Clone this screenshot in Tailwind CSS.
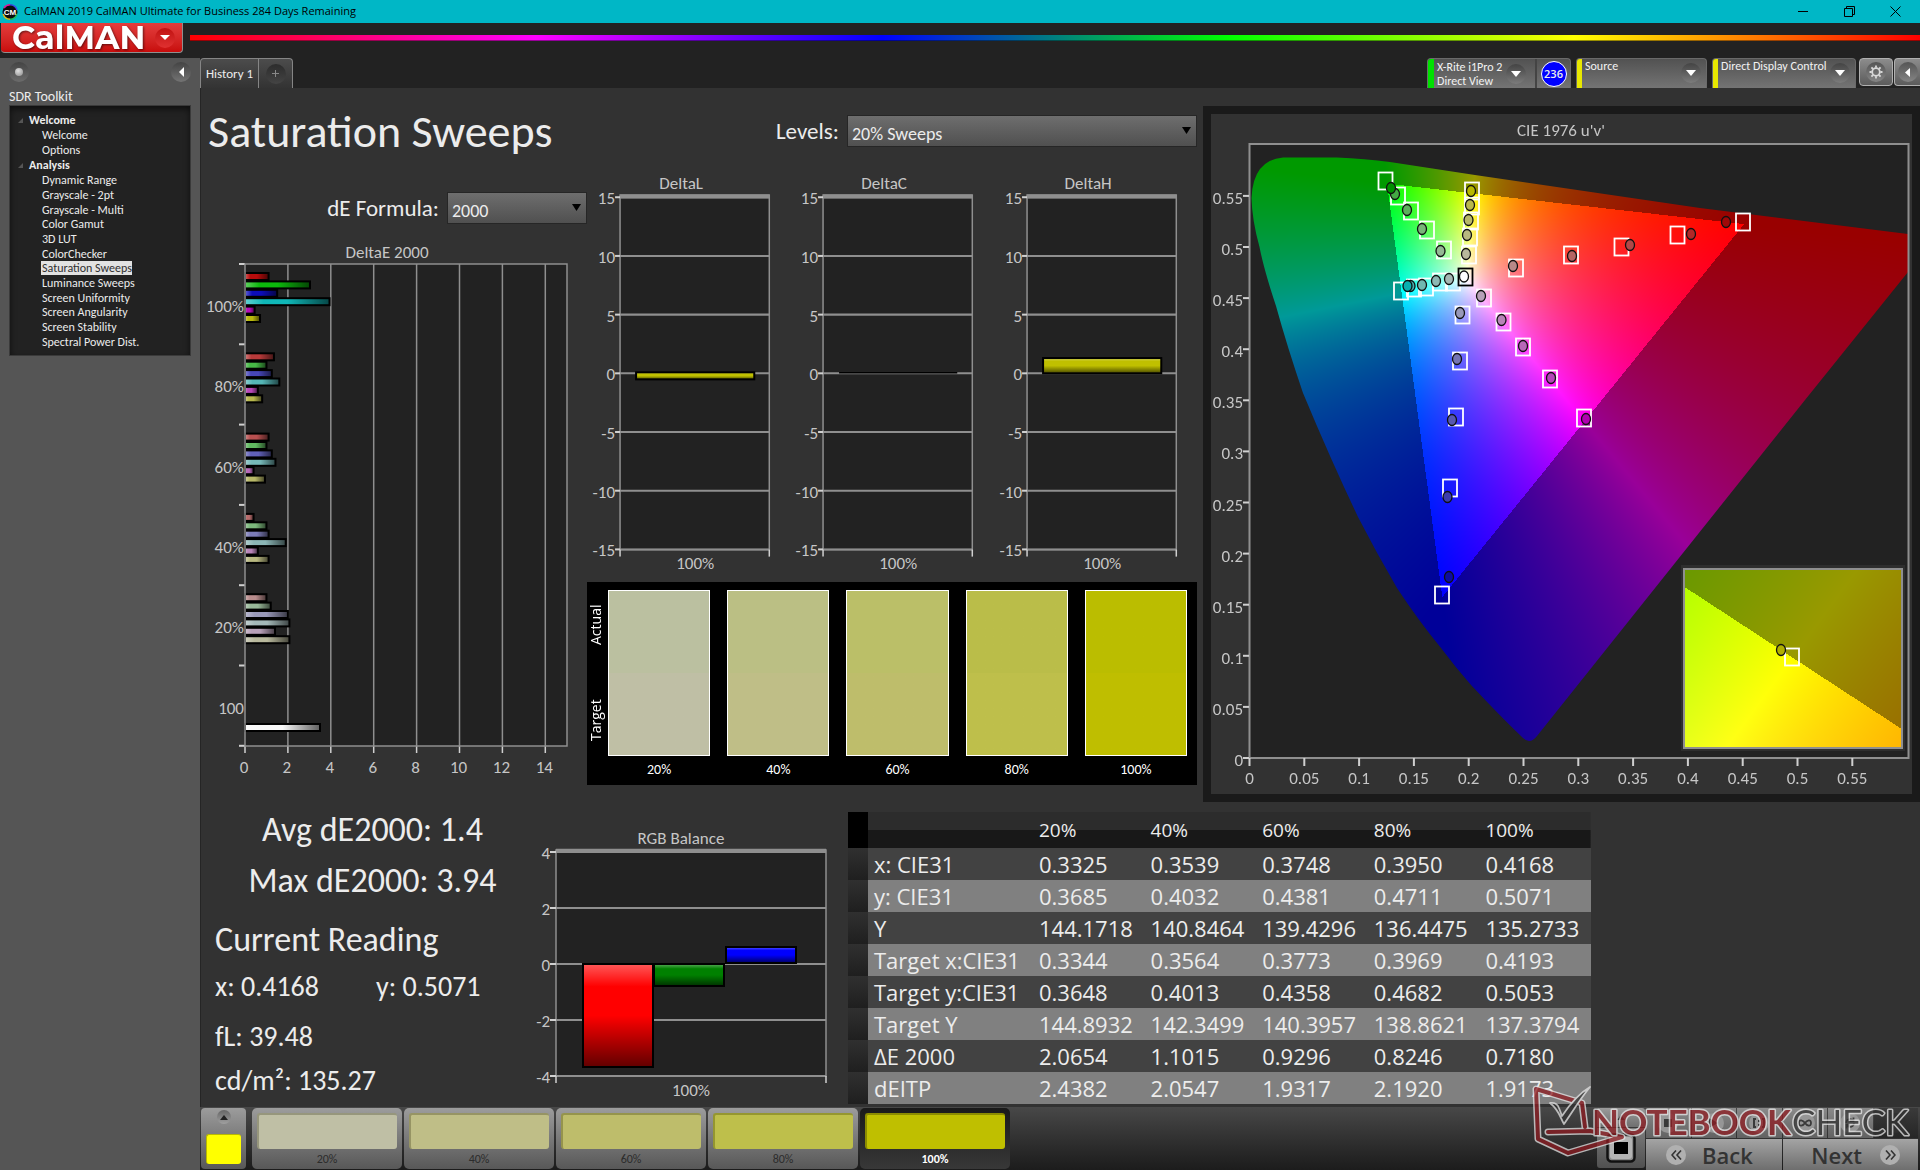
<!DOCTYPE html>
<html lang="en">
<head>
    <meta charset="UTF-8">
    <meta name="viewport" content="width=device-width, initial-scale=1.0">
    <title>CalMAN 2019 - Saturation Sweeps</title>
    <script src="https://cdn.jsdelivr.net/npm/@tailwindcss/browser@4"></script>
</head>
<body class="bg-[#222222] text-[#ececec] font-['Carlito','Lato',sans-serif]">
<div class="min-h-screen flex flex-col relative overflow-hidden">

    <!-- window title bar -->
    <div class="h-[23px] bg-[#00b7c6] flex items-center justify-between text-black">
        <div class="flex items-center gap-[6px] pl-[2px]">
            <svg class="w-4 h-4" viewBox="0 0 16 16">
                <circle cx="8" cy="8" r="7.5" fill="#0b0b0b"/>
                <path d="M2 4A7.5 7.5 0 0 1 8 .7" fill="none" stroke="#e0189a" stroke-width="1.4"/>
                <path d="M8 .7A7.5 7.5 0 0 1 15 6" fill="none" stroke="#3a49e8" stroke-width="1.4"/>
                <path d="M15 10A7.5 7.5 0 0 1 8 15.3" fill="none" stroke="#18c060" stroke-width="1.4"/>
                <path d="M8 15.3A7.5 7.5 0 0 1 1.2 10" fill="none" stroke="#d8c020" stroke-width="1.4"/>
                <text x="8" y="11" text-anchor="middle" fill="#fff" class="text-[8px] font-bold font-['Liberation_Sans',sans-serif]">CM</text>
            </svg>
            <span class="text-[11px] font-['Open_Sans',sans-serif]">CalMAN 2019 CalMAN Ultimate for Business 284 Days Remaining</span>
        </div>
        <div class="flex items-center gap-[26px] pr-[15px]">
            <button aria-label="Minimize" class="w-5 h-5 grid place-items-center"><svg class="w-[11px] h-[11px]" viewBox="0 0 11 11"><path d="M0 5.5h10" stroke="#000"/></svg></button>
            <button aria-label="Restore" class="w-5 h-5 grid place-items-center"><svg class="w-[11px] h-[11px]" viewBox="0 0 11 11" fill="none" stroke="#000"><path d="M.5 2.5h8v8h-8zM2.5 2.5v-2h8v8h-2"/></svg></button>
            <button aria-label="Close" class="w-5 h-5 grid place-items-center"><svg class="w-[11px] h-[11px]" viewBox="0 0 11 11"><path d="M.5.5l10 10M10.5.5l-10 10" stroke="#000"/></svg></button>
        </div>
    </div>

    <!-- logo and rainbow -->
    <header class="h-[35px] flex items-start">
        <button class="ml-px w-[182px] h-[30px] shrink-0 flex items-center justify-between pl-[11px] pr-[7px] rounded-b-[4px] border-r border-b border-[#8f8f8f] bg-linear-to-b from-[#e43c3c] to-[#c80a0a]">
            <span class="text-[32px] leading-[28px] font-bold text-white font-['Montserrat','Inter',sans-serif] drop-shadow-[1px_1px_1px_#0008]">CalMAN</span>
            <span class="w-5 h-5 shrink-0 rounded-full bg-linear-to-b from-[#c01010] to-[#e03030] grid place-items-center">
                <svg class="w-[10px] h-[5px]" viewBox="0 0 10 5"><path d="M0 0h10L5 5z" fill="#fff"/></svg>
            </span>
        </button>
        <div class="ml-[7px] mt-[12px] h-[6px] flex-1 border-b border-black/40 bg-[linear-gradient(90deg,#f00,#f0f,#00f,#0f0,#ff0,#f00)]"></div>
    </header>

    <div class="flex-1 flex">
        <!-- workflow tree -->
        <aside class="w-[200px] shrink-0 bg-[#555555] px-[9px] pt-1">
            <div class="flex justify-between items-center">
                <button aria-label="Options" class="w-5 h-5 rounded-full bg-linear-to-b from-[#444] to-[#6c6c6c] grid place-items-center">
                    <span class="w-2 h-2 rounded-full bg-[radial-gradient(circle_at_40%_35%,#e0e0e0,#8a8a8a)]"></span>
                </button>
                <button aria-label="Collapse" class="w-5 h-5 rounded-full bg-linear-to-b from-[#444] to-[#747474] grid place-items-center">
                    <svg class="w-[5px] h-[10px]" viewBox="0 0 5 10"><path d="M5 0v10L0 5z" fill="#fff"/></svg>
                </button>
            </div>
            <h2 class="mt-[6px] h-[17px] text-sm leading-[17px]">SDR Toolkit</h2>
            <nav class="h-[251px] bg-[#222222] border border-[#3a3a3a] pt-[6px] text-xs shadow-[inset_0_3px_6px_#0009]">
                <h3 class="h-4 leading-4 font-bold flex items-center gap-[6px] pl-2"><svg class="w-[5px] h-[5px]" viewBox="0 0 5 5"><path d="M5 0v5H0z" fill="#555"/></svg>Welcome</h3>
                <ul class="h-[29px] grid auto-rows-fr items-center leading-[14px] pl-[32px]">
                    <li><a href="#">Welcome</a></li>
                    <li><a href="#">Options</a></li>
                </ul>
                <h3 class="h-4 leading-4 font-bold flex items-center gap-[6px] pl-2"><svg class="w-[5px] h-[5px]" viewBox="0 0 5 5"><path d="M5 0v5H0z" fill="#555"/></svg>Analysis</h3>
                <ul class="h-[176px] grid auto-rows-fr items-center leading-[14px] pl-[32px]">
                    <li><a href="#">Dynamic Range</a></li>
                    <li><a href="#">Grayscale - 2pt</a></li>
                    <li><a href="#">Grayscale - Multi</a></li>
                    <li><a href="#">Color Gamut</a></li>
                    <li><a href="#">3D LUT</a></li>
                    <li><a href="#">ColorChecker</a></li>
                    <li class="flex"><a href="#" aria-current="page" class="-ml-px pl-px bg-[#e2e2e2] text-[#303030]">Saturation Sweeps</a></li>
                    <li><a href="#">Luminance Sweeps</a></li>
                    <li><a href="#">Screen Uniformity</a></li>
                    <li><a href="#">Screen Angularity</a></li>
                    <li><a href="#">Screen Stability</a></li>
                    <li><a href="#">Spectral Power Dist.</a></li>
                </ul>
            </nav>
        </aside>

        <div class="flex-1 min-w-0 flex flex-col">
            <!-- tabs and devices -->
            <div class="h-[30px] flex justify-between">
                <div class="flex border border-b-0 border-[#858585] rounded-t-[4px] bg-linear-to-b from-[#4c4c4c] to-[#333333]">
                    <button class="w-[58px] text-[13px] border-r border-[#858585]">History 1</button>
                    <button aria-label="Add history" class="w-[33px] grid place-items-center">
                        <span class="w-5 h-5 rounded-full bg-linear-to-b from-[#2c2c2c] to-[#444] grid place-items-center"><svg class="w-[7px] h-[7px]" viewBox="0 0 7 7"><path d="M3.5 0v7M0 3.5h7" stroke="#888"/></svg></span>
                    </button>
                </div>
                <div class="flex items-start text-xs leading-[14px]">
                    <div class="w-[144px] h-[30px] mr-[5px] flex items-stretch rounded-t-[4px] border border-b-0 border-[#6a6a6a] bg-linear-to-b from-[#525252] to-[#747474] overflow-hidden">
                        <span class="w-[6px] shrink-0 bg-[#00e000]"></span>
                        <button class="flex-1 flex items-center justify-between pl-[3px] pr-[9px] text-left whitespace-nowrap text-[#f2f2f2]">
                            <span>X-Rite i1Pro 2<br>Direct View</span>
                            <span class="w-5 h-5 shrink-0 rounded-full bg-linear-to-b from-[#444] to-[#7c7c7c] grid place-items-center"><svg class="w-[10px] h-[6px]" viewBox="0 0 10 6"><path d="M0 0h10L5 6z" fill="#fff"/></svg></span>
                        </button>
                        <span class="w-[35px] shrink-0 border-l-2 border-[#444] grid place-items-center">
                            <span class="w-[26px] h-[26px] rounded-full bg-[#0000ff] border border-white grid place-items-center text-[11px] font-semibold font-['Open_Sans',sans-serif]">236</span>
                        </span>
                    </div>
                    <div class="w-[131px] h-[30px] mr-[5px] flex items-stretch rounded-t-[4px] border border-b-0 border-[#6a6a6a] bg-linear-to-b from-[#525252] to-[#747474] overflow-hidden">
                        <span class="w-[5px] shrink-0 bg-[#e8e800]"></span>
                        <button class="flex-1 flex items-start justify-between pl-[3px] pr-[5px] text-left text-[#f2f2f2]">
                            <span>Source</span>
                            <span class="mt-1 w-5 h-5 shrink-0 rounded-full bg-linear-to-b from-[#444] to-[#7c7c7c] grid place-items-center"><svg class="w-[10px] h-[6px]" viewBox="0 0 10 6"><path d="M0 0h10L5 6z" fill="#fff"/></svg></span>
                        </button>
                    </div>
                    <div class="w-[144px] h-[30px] mr-[3px] flex items-stretch rounded-t-[4px] border border-b-0 border-[#6a6a6a] bg-linear-to-b from-[#525252] to-[#747474] overflow-hidden">
                        <span class="w-[5px] shrink-0 bg-[#e8e800]"></span>
                        <button class="flex-1 flex items-start justify-between pl-[3px] pr-[5px] text-left whitespace-nowrap text-[#f2f2f2]">
                            <span>Direct Display Control</span>
                            <span class="mt-1 w-5 h-5 shrink-0 rounded-full bg-linear-to-b from-[#444] to-[#7c7c7c] grid place-items-center"><svg class="w-[10px] h-[6px]" viewBox="0 0 10 6"><path d="M0 0h10L5 6z" fill="#fff"/></svg></span>
                        </button>
                    </div>
                    <button aria-label="Settings" class="w-[34px] h-[28px] mr-px rounded-[4px] border border-[#b0b0b0] bg-linear-to-b from-[#8c8c8c] to-[#5c5c5c] grid place-items-center">
                        <span class="w-5 h-5 rounded-full bg-linear-to-b from-[#555] to-[#858585] grid place-items-center">
                            <svg class="w-[14px] h-[14px]" viewBox="0 0 14 14" fill="none" stroke="#d8d8d8"><circle cx="7" cy="7" r="3.8" stroke-width="1.8"/><path d="M7 .5v2.2M7 11.3v2.2M.5 7h2.2M11.3 7h2.2M2.4 2.4l1.6 1.6M10 10l1.6 1.6M2.4 11.6l1.6-1.6M10 4l1.6-1.6" stroke-width="1.8"/></svg>
                        </span>
                    </button>
                    <button aria-label="Collapse panel" class="w-[26px] h-[28px] rounded-l-[4px] border border-r-0 border-[#b0b0b0] bg-linear-to-b from-[#8c8c8c] to-[#5c5c5c] grid place-items-center">
                        <span class="w-5 h-5 rounded-full bg-linear-to-b from-[#555] to-[#858585] grid place-items-center"><svg class="w-[5px] h-[9px]" viewBox="0 0 5 9"><path d="M5 0v9L0 4.5z" fill="#fff"/></svg></span>
                    </button>
                </div>
            </div>

            <main class="flex-1 bg-[#323232] border-l border-[#252525]">
                <div class="grid grid-cols-[1002fr_717fr]">
                    <div>
                        <div class="h-[86px] flex items-center justify-between pl-[7px] pr-[6px]">
                            <h1 class="text-[46px] leading-[50px] whitespace-nowrap">Saturation Sweeps</h1>
                            <div class="flex items-center">
                                <label for="levels" class="text-[23px] mr-2">Levels:</label>
                                <div class="relative">
                                    <select id="levels" class="w-[350px] h-8 pl-1 pt-[6px] appearance-none text-lg leading-6 bg-linear-to-b from-[#6e6e6e] to-[#505050] border border-[#262626]">
                                        <option>20% Sweeps</option>
                                    </select>
                                    <svg class="absolute right-[6px] top-[12px] w-[9px] h-[7px] pointer-events-none" viewBox="0 0 9 7"><path d="M0 0h9L4.500 7z" fill="#000"/></svg>
                                </div>
                            </div>
                        </div>

                        <div class="grid grid-cols-[386fr_616fr]">
                            <div>
                                <div class="h-[68px] flex items-center justify-end">
                                    <label for="formula" class="text-[23px] mr-2">dE Formula:</label>
                                    <div class="relative">
                                        <select id="formula" class="w-[140px] h-8 pl-1 pt-[6px] appearance-none text-lg leading-6 bg-linear-to-b from-[#6e6e6e] to-[#505050] border border-[#262626]">
                                            <option>2000</option>
                                        </select>
                                        <svg class="absolute right-[6px] top-[12px] w-[9px] h-[7px] pointer-events-none" viewBox="0 0 9 7"><path d="M0 0h9L4.500 7z" fill="#000"/></svg>
                                    </div>
                                </div>
                                <svg id="deltaE" class="w-full fill-[#c6c6c6] text-[17px]" viewBox="0 0 386 543"></svg>
                            </div>

                            <div class="pr-[6px]">
                                <div class="grid grid-cols-3 fill-[#c6c6c6] text-[17px]">
                                    <svg id="deltaL" class="w-full" viewBox="0 0 203 407"></svg>
                                    <svg id="deltaC" class="w-full" viewBox="0 0 203 407"></svg>
                                    <svg id="deltaH" class="w-full" viewBox="0 0 203 407"></svg>
                                </div>
                                <!-- actual / target patches -->
                                <div class="h-[203px] bg-black flex pt-2 pr-[10px] text-sm leading-[28px] text-center text-white">
                                    <div class="w-[21px] h-[166px] shrink-0 flex">
                                        <div class="h-full [writing-mode:vertical-rl] rotate-180 flex justify-between pt-[15px] pb-[15px] leading-[18px] text-sm font-medium font-['Open_Sans',sans-serif]">
                                            <span>Target</span><span>Actual</span>
                                        </div>
                                    </div>
                                    <div class="flex-1 grid grid-cols-5 gap-[17px]">
                                        <div><div class="h-[166px] border border-white bg-linear-to-b from-[#bbc0a0] from-50% to-[#bfbfa5] to-50%"></div>20%</div>
                                        <div><div class="h-[166px] border border-white bg-linear-to-b from-[#bbbf84] from-50% to-[#bfbe87] to-50%"></div>40%</div>
                                        <div><div class="h-[166px] border border-white bg-linear-to-b from-[#bbbf68] from-50% to-[#bebd6b] to-50%"></div>60%</div>
                                        <div><div class="h-[166px] border border-white bg-linear-to-b from-[#babd49] from-50% to-[#bebf4b] to-50%"></div>80%</div>
                                        <div><div class="h-[166px] border border-white bg-linear-to-b from-[#bbbd00] from-50% to-[#bfbe00] to-50%"></div>100%</div>
                                    </div>
                                </div>
                            </div>
                        </div>
                    </div>

                    <div class="mt-[18px] h-fit border-8 border-[#1a1a1a]">
                        <svg id="cie" class="w-full fill-[#c6c6c6] text-[17px]" viewBox="1211 114 701 680">
                            <rect x="1249.500" y="144" width="659" height="614" fill="#222222"/>
                            <foreignObject x="1250" y="144" width="658" height="614"><canvas id="locus" class="block w-full h-full" width="658" height="614"></canvas></foreignObject>
                            <rect x="1249.500" y="144" width="659" height="614" fill="none" stroke="#8f8f8f" stroke-width="2"/>
                            <rect x="1681" y="565" width="224" height="186" fill="#2e2e2e"/>
                            <foreignObject x="1684" y="569" width="218" height="179"><canvas id="inset" class="block w-full h-full" width="218" height="179"></canvas></foreignObject>
                            <rect x="1684" y="569" width="218" height="179" fill="none" stroke="#8f8f8f" stroke-width="2"/>
                        </svg>
                    </div>
                </div>

                <div class="h-[305px] grid grid-cols-[334fr_313fr_743fr_329fr]">
                    <section class="pt-[2px] pl-[14px] text-[28px] leading-[44px] whitespace-nowrap">
                        <div class="text-[34px] leading-[51px] text-center pr-[5px]">
                            <p>Avg dE2000: 1.4</p>
                            <p>Max dE2000: 3.94</p>
                        </div>
                        <h2 class="mt-3 text-[34px]">Current Reading</h2>
                        <p class="mt-[3px] flex"><span class="w-[161px]">x: 0.4168</span><span>y: 0.5071</span></p>
                        <p class="mt-[6px]">fL: 39.48</p>
                        <p>cd/m²: 135.27</p>
                    </section>

                    <svg id="rgb" class="w-full fill-[#c6c6c6] text-[17px]" viewBox="0 0 313 303"></svg>

                    <table class="mt-[10px] h-fit w-full table-fixed text-left text-[22px] leading-[30px] font-['Open_Sans',sans-serif]">
                        <colgroup><col class="w-[20px]"><col class="w-[165px]"><col><col><col><col><col></colgroup>
                        <thead class="bg-[linear-gradient(#2c2c2c_0_50%,#181818_50%_100%)] text-[19px]">
                            <tr class="h-[36px]"><td class="bg-black"></td><td></td><th class="font-medium pl-[6px]">20%</th><th class="font-medium pl-[6px]">40%</th><th class="font-medium pl-[6px]">60%</th><th class="font-medium pl-[6px]">80%</th><th class="font-medium pl-[6px]">100%</th></tr>
                        </thead>
                        <tbody id="readings"></tbody>
                    </table>
                </div>
            </main>

            <!-- patch buttons and transport -->
            <footer class="h-[63px] flex justify-between pl-px bg-linear-to-b from-[#484848] to-[#1c1c1c]">
                <div class="flex pt-px text-xs text-[#2c2c2c]">
                    <button aria-label="Current patch" class="w-[45px] h-[61px] mr-[6px] rounded-[4px] bg-linear-to-b from-[#9c9c9c] to-[#585858] flex flex-col items-center pt-[2px]">
                        <span class="w-[14px] h-[14px] rounded-full bg-linear-to-b from-[#666] to-[#a0a0a0] grid place-items-center"><svg class="w-2 h-[5px]" viewBox="0 0 8 5"><path d="M0 5h8L4 0z" fill="#222"/></svg></span>
                        <span class="mt-[10px] w-[35px] h-[30px] rounded-[3px] bg-[#ffff00] border-t border-l border-[#b8b800]"></span>
                    </button>
                    <div class="flex gap-[2px]">
                        <button class="w-[150px] h-[61px] rounded-[5px] bg-linear-to-b from-[#9c9c9c] to-[#585858] p-[5px] leading-[21px]"><span class="block h-[36px] rounded-[3px] border-t-2 border-l-2 border-[#96967c] bg-[#bfbfa5]"></span>20%</button>
                        <button class="w-[150px] h-[61px] rounded-[5px] bg-linear-to-b from-[#9c9c9c] to-[#585858] p-[5px] leading-[21px]"><span class="block h-[36px] rounded-[3px] border-t-2 border-l-2 border-[#969464] bg-[#bfbe87]"></span>40%</button>
                        <button class="w-[150px] h-[61px] rounded-[5px] bg-linear-to-b from-[#9c9c9c] to-[#585858] p-[5px] leading-[21px]"><span class="block h-[36px] rounded-[3px] border-t-2 border-l-2 border-[#95944c] bg-[#bebd6b]"></span>60%</button>
                        <button class="w-[150px] h-[61px] rounded-[5px] bg-linear-to-b from-[#9c9c9c] to-[#585858] p-[5px] leading-[21px]"><span class="block h-[36px] rounded-[3px] border-t-2 border-l-2 border-[#959630] bg-[#bebf4b]"></span>80%</button>
                        <button class="w-[150px] h-[61px] rounded-[5px] bg-linear-to-b from-[#1a1a1a] to-[#383838] p-[5px] leading-[21px] font-bold text-white"><span class="block h-[36px] rounded-[3px] border-t-2 border-l-2 border-[#8c8c00] bg-[#bfbf00]"></span>100%</button>
                    </div>
                </div>

                <div class="flex gap-px pt-px pr-[2px]">
                    <div class="w-[48px] h-[60px] flex flex-col gap-px">
                        <button aria-label="Expand" class="h-[19px] rounded-t-[3px] bg-linear-to-b from-[#9a9a9a] to-[#707070] grid place-items-center"><svg class="w-2 h-[5px]" viewBox="0 0 8 5"><path d="M0 5h8L4 0z" fill="#333"/></svg></button>
                        <button aria-label="Stop" class="flex-1 rounded-b-[3px] bg-linear-to-b from-[#7c7c7c] to-[#505050] grid place-items-center">
                            <svg class="w-[30px] h-[30px]" viewBox="0 0 30 30"><rect x="1.500" y="1.500" width="27" height="27" rx="4" fill="#8a8a8a" stroke="#111" stroke-width="2.500"/><rect x="4" y="4" width="22" height="22" rx="3" fill="#b4b4b4"/><rect x="8" y="9" width="14" height="12" fill="#000"/></svg>
                        </button>
                    </div>
                    <div class="w-[272px] flex flex-col gap-px">
                        <div class="h-[30px] grid grid-cols-6 gap-px">
                            <button aria-label="Stop reading" class="bg-linear-to-b from-[#8a8a8a] to-[#626262] rounded-tl-[3px] grid place-items-center"><span class="w-5 h-5 rounded-full bg-[#969696] grid place-items-center"><span class="w-2 h-2 bg-[#3a3a3a]"></span></span></button>
                            <button aria-label="Play" class="bg-linear-to-b from-[#8a8a8a] to-[#626262] grid place-items-center"><span class="w-5 h-5 rounded-full bg-[#969696] grid place-items-center"><svg class="w-[9px] h-[10px]" viewBox="0 0 9 10"><path d="M0 0v10l9-5z" fill="#3a3a3a"/></svg></span></button>
                            <button aria-label="Read series" class="bg-linear-to-b from-[#8a8a8a] to-[#626262] grid place-items-center"><span class="w-5 h-5 rounded-full bg-[#969696] grid place-items-center"><svg class="w-3 h-[10px]" viewBox="0 0 12 10" fill="none" stroke="#3a3a3a" stroke-width="2"><path d="M3 1H1v8h2M9 1h2v8H9M6 2v2M6 6v2"/></svg></span></button>
                            <button aria-label="Read continuous" class="bg-linear-to-b from-[#8a8a8a] to-[#626262] grid place-items-center"><span class="w-5 h-5 rounded-full bg-[#969696] grid place-items-center"><svg class="w-[14px] h-2" viewBox="0 0 14 8" fill="none" stroke="#3a3a3a" stroke-width="1.8"><path d="M7 4C5 1 1 0 1 4s4 3 6 0 6-4 6 0-4 3-6 0z"/></svg></span></button>
                            <button aria-label="Refresh" class="bg-linear-to-b from-[#8a8a8a] to-[#626262] grid place-items-center"><span class="w-5 h-5 rounded-full bg-[#969696] grid place-items-center"><svg class="w-3 h-3" viewBox="0 0 12 12" fill="none" stroke="#3a3a3a" stroke-width="1.8"><path d="M2 6a4 4 0 0 1 7-2.500M10 6a4 4 0 0 1-7 2.500M9.500.5v3.500H6M2.500 11.500V8H6"/></svg></span></button>
                            <span class="bg-linear-to-b from-[#3a3a3a] to-[#262626] grid place-items-center"><span class="w-5 h-5 rounded-full bg-[#303030]"></span></span>
                        </div>
                        <div class="flex-1 grid grid-cols-2 gap-px text-[22px] leading-[26px] text-[#333] font-['Open_Sans',sans-serif] font-semibold">
                            <button class="bg-linear-to-b from-[#a4a4a4] to-[#6e6e6e] flex items-center pl-[20px] gap-[16px]"><span class="w-5 h-5 rounded-full bg-[#b0b0b0] grid place-items-center"><svg class="w-[11px] h-[10px]" viewBox="0 0 11 10" fill="none" stroke="#333" stroke-width="1.6"><path d="M5 .5L1 5l4 4.500M10 .5L6 5l4 4.500"/></svg></span>Back</button>
                            <button class="bg-linear-to-b from-[#a4a4a4] to-[#6e6e6e] flex items-center justify-end pr-[18px] gap-[18px]">Next<span class="w-5 h-5 rounded-full bg-[#b0b0b0] grid place-items-center"><svg class="w-[11px] h-[10px]" viewBox="0 0 11 10" fill="none" stroke="#333" stroke-width="1.6"><path d="M1 .5L5 5 1 9.500M6 .5L10 5 6 9.500"/></svg></span></button>
                        </div>
                    </div>
                </div>
            </footer>
        </div>
    </div>

    <!-- site watermark -->
    <svg class="absolute right-0 bottom-0 w-[390px] h-[90px] opacity-75 pointer-events-none" viewBox="0 0 390 90">
        <g fill="none" stroke-linejoin="round" stroke-linecap="round">
            <path d="M55 47L52 23L6 9L8 59L38 73L92 57L60 51L18 52" stroke="#e4e4e4" stroke-width="7"/>
            <path d="M55 47L52 23L6 9L8 59L38 73L92 57L60 51L18 52" stroke="#8e1c22" stroke-width="4"/>
            <path d="M20 23c5-1 8 2 9 5l3 8C38 27 48 14 60 7 50 19 41 34 34 44c-4-7-5-14-14-21z" fill="#333" stroke="#e4e4e4" stroke-width="1.8"/>
        </g>
        <g class="text-[35px] font-['Lato',sans-serif]" stroke="#e8e8e8" stroke-width="3" stroke-linejoin="round" paint-order="stroke">
            <text x="62" y="55" fill="#8e1c22" class="font-bold">NOTEBOOK</text>
            <text x="262" y="55" fill="#333">CHECK</text>
        </g>
    </svg>
</div>

<script>
const NS = 'http://www.w3.org/2000/svg';

function add(parent, tag, attrs, text) {
    const el = document.createElementNS(NS, tag);
    for (const k in attrs) el.setAttribute(k, attrs[k]);
    if (text !== undefined) el.textContent = text;
    parent.appendChild(el);
    return el;
}
const line = (p, x1, y1, x2, y2, stroke = '#8f8f8f', w = 1.5) =>
    add(p, 'line', {x1, y1, x2, y2, stroke, 'stroke-width': w});
const label = (p, x, y, text, anchor = 'middle') =>
    add(p, 'text', {x, y: y + 6, 'text-anchor': anchor}, text);

// highlight -> colour -> shadow overlay used by every bar
function shade(svg, id, vertical) {
    const defs = add(svg, 'defs', {});
    const g = add(defs, 'linearGradient', {id, x1: 0, y1: 0, x2: vertical ? 0 : 1, y2: vertical ? 1 : 0});
    add(g, 'stop', {offset: 0, 'stop-color': '#fff', 'stop-opacity': .35});
    add(g, 'stop', {offset: .22, 'stop-color': '#fff', 'stop-opacity': 0});
    add(g, 'stop', {offset: .5, 'stop-color': '#000', 'stop-opacity': 0});
    add(g, 'stop', {offset: 1, 'stop-color': '#000', 'stop-opacity': .62});
}
function bar(svg, id, x, y, width, height, fill) {
    add(svg, 'rect', {x, y, width, height, fill});
    add(svg, 'rect', {x, y, width, height, fill: `url(#${id})`, stroke: '#000', 'stroke-width': 2});
}

// DeltaE 2000
(function () {
    const svg = document.getElementById('deltaE');
    shade(svg, 'shadeE', false);
    const X0 = 44, X1 = 366, Y0 = 22, Y1 = 504, UNIT = 21.45;
    add(svg, 'rect', {x: X0, y: Y0, width: X1 - X0, height: Y1 - Y0, fill: '#222222'});
    label(svg, 186, 10, 'DeltaE 2000');
    for (let v = 0; v <= 14; v += 2) {
        const x = X0 + v * UNIT;
        if (v) line(svg, x, Y0, x, Y1);
        line(svg, x, Y1, x, Y1 + 7, '#d0d0d0');
        label(svg, x - 1, 525, v);
    }
    const groups = [
        ['100%', [1.1, 3.03, 1.5, 3.94, .45, .7], ['#b80c0c', '#0cb80c', '#0c0cb8', '#10b8b8', '#b80cb8', '#b8b80c']],
        ['80%', [1.35, 1, 1.25, 1.6, .6, .8], ['#b83a3a', '#46b846', '#4646b8', '#55b6b6', '#b848b8', '#b8b84c']],
        ['60%', [1.1, 1, 1.25, 1.42, .4, .93], ['#b85050', '#60b860', '#6060b8', '#76b8b8', '#b868b8', '#b8b868']],
        ['40%', [.4, 1, 1.1, 1.9, .6, 1.1], ['#b86c6c', '#7cb87c', '#7c7cb8', '#8cb6b6', '#b884b8', '#b8b880']],
        ['20%', [1, 1.2, 2, 2.07, 1.4, 2.07], ['#b88c8c', '#98b898', '#9898b8', '#a4b8b8', '#b8a0b8', '#b8b89c']]
    ];
    groups.forEach(([name, values, colours], i) => {
        label(svg, X0 - 1, 64 + i * 80.3, name, 'end');
        values.forEach((v, j) => bar(svg, 'shadeE', X0, 31 + i * 80.3 + j * 8.4, v * UNIT, 7, colours[j]));
    });
    label(svg, X0 - 1, 466, 100, 'end');
    bar(svg, 'shadeE', X0, 482, 75, 7, '#f8f8f8');
    for (let i = 0; i <= 6; i++) line(svg, X0 - 6, Y0 + i * 80.3, X0, Y0 + i * 80.3, '#d0d0d0', 2);
    add(svg, 'rect', {x: X0, y: Y0, width: X1 - X0, height: Y1 - Y0, fill: 'none', stroke: '#8f8f8f', 'stroke-width': 1.5});
})();

// DeltaL / DeltaC / DeltaH
[['deltaL', 'DeltaL', -.6], ['deltaC', 'DeltaC', .05], ['deltaH', 'DeltaH', 1.3]].forEach(([id, title, value]) => {
    const svg = document.getElementById(id);
    shade(svg, id + 'Shade', true);
    label(svg, 94, 9, title);
    add(svg, 'rect', {x: 33, y: 21, width: 149, height: 354, fill: '#222222', stroke: '#8f8f8f', 'stroke-width': 1.5});
    line(svg, 33, 22.5, 182, 22.5, '#8f8f8f', 4);
    for (let v = 15; v >= -15; v -= 5) {
        const y = 199 - v * 11.72;
        line(svg, 33, y, 182, y, '#8f8f8f', 2);
        line(svg, 28, y, 33, y, '#d0d0d0', 2);
        label(svg, 28, y + 1, v, 'end');
    }
    line(svg, 33, 375, 33, 382, '#d0d0d0');
    line(svg, 182, 375, 182, 382, '#d0d0d0');
    label(svg, 108, 388, '100%');
    const h = Math.abs(value) * 11.72;
    if (h < 1) line(svg, 49, 198.5, 167, 198.5, '#000', 1.5);
    else bar(svg, id + 'Shade', 49, value > 0 ? 199 - h : 198, 118, h, '#c0c000');
});

// RGB Balance
(function () {
    const svg = document.getElementById('rgb');
    shade(svg, 'shadeRgb', true);
    label(svg, 146, 36, 'RGB Balance');
    add(svg, 'rect', {x: 21, y: 48, width: 270, height: 226, fill: '#222222', stroke: '#8f8f8f', 'stroke-width': 1.5});
    line(svg, 21, 48.5, 291, 48.5, '#8f8f8f', 3.5);
    for (let v = 4; v >= -4; v -= 2) {
        const y = 162 - v * 28;
        line(svg, 21, y, 291, y, '#8f8f8f', 2);
        line(svg, 15, y, 21, y, '#d0d0d0', 2);
        label(svg, 15, y + 1, v, 'end');
    }
    line(svg, 21, 274, 21, 281, '#d0d0d0');
    line(svg, 291, 274, 291, 281, '#d0d0d0');
    label(svg, 156, 288, '100%');
    bar(svg, 'shadeRgb', 48, 162, 70, 103, '#ff0000');
    bar(svg, 'shadeRgb', 119, 162, 70, 22, '#008000');
    bar(svg, 'shadeRgb', 191, 145, 70, 16, '#0000ff');
})();

// chromaticity fills: linear RGB clipped and normalised, dimmed outside Rec.709
function fillGamut(canvas, toXY) {
    const ctx = canvas.getContext('2d');
    const img = ctx.createImageData(canvas.width, canvas.height);
    for (let py = 0; py < canvas.height; py++) {
        for (let px = 0; px < canvas.width; px++) {
            const [x, y] = toXY(px, py);
            const z = 1 - x - y;
            const rgb = [
                3.2406 * x - 1.5372 * y - .4986 * z,
                -.9689 * x + 1.8758 * y + .0415 * z,
                .0557 * x - .2040 * y + 1.0570 * z
            ];
            const level = Math.min(...rgb) < 0 ? 153 : 255;
            const max = Math.max(...rgb);
            const o = (py * canvas.width + px) * 4;
            for (let i = 0; i < 3; i++) img.data[o + i] = Math.max(0, rgb[i]) / max * level;
            img.data[o + 3] = 255;
        }
    }
    ctx.putImageData(img, 0, 0);
    return ctx;
}
const ctx = fillGamut(document.getElementById('locus'), (px, py) => {
    const u = (px + .5) / 1096, v = (614 - py) / 1022;
    const d = 6 * u - 16 * v + 12;
    return [9 * u / d, 4 * v / d];
});
ctx.globalCompositeOperation = 'destination-in';
ctx.translate(-1250, -144);
ctx.fill(new Path2D('M1283 157.500H1337Q1365 158.500 1390 162L1475 175L1700 208L1908 234V272L1805 400L1537 736Q1530 745 1523 738Q1500 716 1471 685Q1456 668 1441 648Q1418 620 1397 588Q1376 552 1358 517Q1330 458 1303 393Q1287 346 1276 306Q1264 270 1259.500 247Q1252 220 1251.500 198Q1253 160 1283 157.500Z'));
fillGamut(document.getElementById('inset'), (px, py) => [.4193 + (px - 108) / 4370, .5053 - (py - 88) / 3600]);

(function () {
    const svg = document.getElementById('cie');
    label(svg, 1561, 130, "CIE 1976 u'v'");
    for (let i = 0; i <= 11; i++) {
        const text = String(i * 5 / 100);
        const x = 1249.5 + i * 54.8, y = 758 - i * 51.1;
        line(svg, x, 758, x, 766, '#d0d0d0', 2);
        label(svg, x, 778, text);
        line(svg, 1243, y, 1249, y, '#d0d0d0', 2);
        label(svg, 1243, y + 2, text, 'end');
    }
    const square = (x, y, stroke = '#fff') =>
        add(svg, 'rect', {x: x - 7, y: y - 8.5, width: 14, height: 17, fill: 'none', stroke, 'stroke-width': 1.8});
    const dot = (x, y, fill) =>
        add(svg, 'ellipse', {cx: x, cy: y, rx: 4.5, ry: 5.5, fill, stroke: '#111', 'stroke-width': 1.3});

    [
        [1385.5, 181], [1398, 196], [1411, 211], [1427, 230], [1444, 250],
        [1472, 191], [1472, 206], [1471, 221], [1470, 237], [1469, 255],
        [1743, 222], [1677.5, 235], [1621.5, 247], [1571, 255], [1516, 268],
        [1401, 291], [1414, 288], [1426, 287], [1440, 282], [1453, 282],
        [1484, 298], [1503.5, 322], [1523, 347], [1550, 379], [1584, 418],
        [1462.5, 315], [1460, 361], [1456, 417], [1450, 488], [1442, 595], [1792, 657]
    ].forEach(([x, y]) => square(x, y));
    square(1465.5, 277, '#000');

    [
        [1395, 194, '#44a844'], [1391, 188, '#009000'], [1407, 210, '#5cb05c'], [1422, 229, '#78b478'], [1440.5, 251, '#94b894'],
        [1471, 191, '#b8b800'], [1470, 205, '#b8b84c'], [1468.5, 220, '#b8b868'], [1467, 235, '#b8b880'], [1466, 254, '#b8b89c'],
        [1726, 222, '#a00808'], [1691, 234, '#b02828'], [1630, 245, '#b04848'], [1572, 256, '#b46464'], [1513, 266, '#b88888'],
        [1410.5, 286, '#44b0b0'], [1407.5, 286, '#08b0b0'], [1422, 285, '#70b8b0'], [1436, 281, '#8cb8b4'], [1449, 279, '#a4b8b4'],
        [1481, 296, '#b8a0b8'], [1501.5, 320, '#b884b8'], [1523, 346, '#b868b8'], [1551, 378, '#b444b8'], [1586, 419, '#b000b0'],
        [1460, 313, '#9898b8'], [1457, 359, '#7474b4'], [1452, 420, '#5858b0'], [1447.5, 497, '#3c3cac'], [1449, 577, '#0c0ca0'],
        [1464, 276.5, '#ffffff'], [1781, 650, '#b0b000']
    ].forEach(([x, y, c]) => dot(x, y, c));
})();

// readings table
const rows = [
    ['x: CIE31', '0.3325', '0.3539', '0.3748', '0.3950', '0.4168'],
    ['y: CIE31', '0.3685', '0.4032', '0.4381', '0.4711', '0.5071'],
    ['Y', '144.1718', '140.8464', '139.4296', '136.4475', '135.2733'],
    ['Target x:CIE31', '0.3344', '0.3564', '0.3773', '0.3969', '0.4193'],
    ['Target y:CIE31', '0.3648', '0.4013', '0.4358', '0.4682', '0.5053'],
    ['Target Y', '144.8932', '142.3499', '140.3957', '138.8621', '137.3794'],
    ['ΔE 2000', '2.0654', '1.1015', '0.9296', '0.8246', '0.7180'],
    ['dEITP', '2.4382', '2.0547', '1.9317', '2.1920', '1.9173']
];
document.getElementById('readings').innerHTML = rows.map(r =>
    `<tr class="h-8 bg-[#424242] even:bg-[#808080]"><td class="bg-linear-to-b from-[#303030] to-[#1f1f1f]"></td>` +
    r.map(c => `<td class="pl-[6px] whitespace-nowrap">${c}</td>`).join('') + '</tr>').join('');
</script>
</body>
</html>
